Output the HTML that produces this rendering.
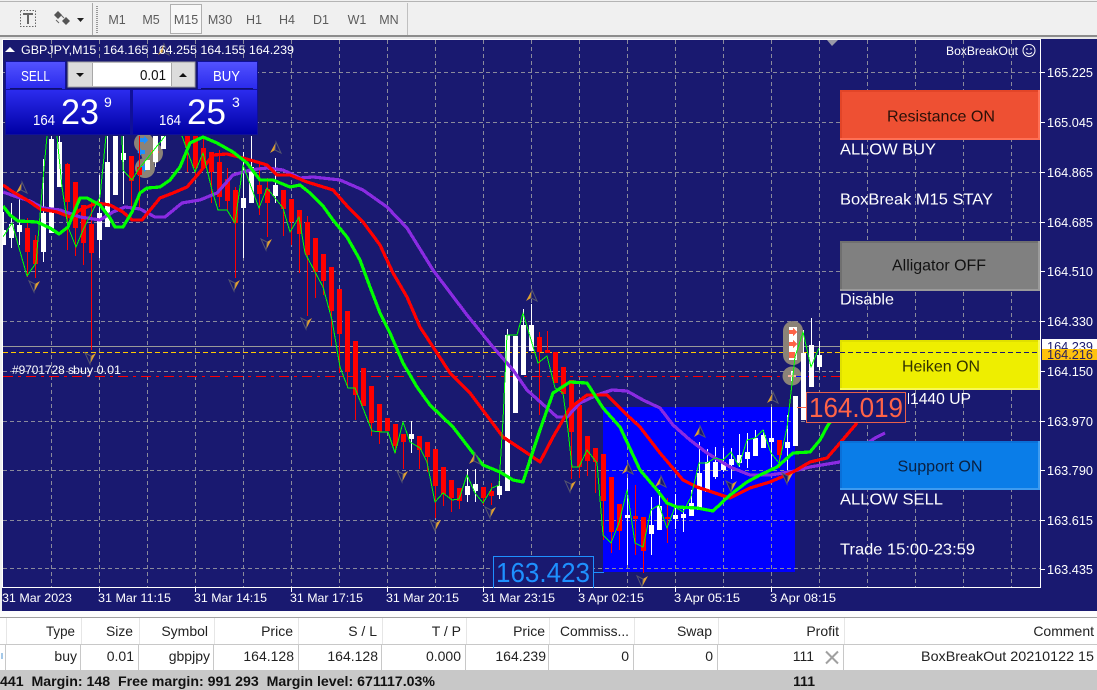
<!DOCTYPE html>
<html><head><meta charset="utf-8"><style>
html,body{margin:0;padding:0;background:#f0f0f0}
svg{display:block;font-family:"Liberation Sans",sans-serif}
.w{fill:none;stroke:#fff;stroke-width:1}
.wb{fill:none;stroke:#fff;stroke-width:5}
.r{fill:none;stroke:#f00;stroke-width:1}
.rb{fill:none;stroke:#f00;stroke-width:5}
.p{fill:none;stroke-linejoin:round}
.ax{fill:#fff;font-size:13px}
.tm{fill:#fff;font-size:12px}
.lb{fill:#fff;font-size:16px}
.bt{font-size:16px;text-anchor:middle}
.th{fill:#222;font-size:14px;text-anchor:end}
</style></head><body>
<svg width="1097" height="690" viewBox="0 0 1097 690" xmlns="http://www.w3.org/2000/svg">
<defs>
<linearGradient id="g1" x1="0" y1="0" x2="0" y2="1"><stop offset="0" stop-color="#5252ff"/><stop offset="1" stop-color="#2a2aec"/></linearGradient>
<linearGradient id="g2" x1="0" y1="0" x2="0" y2="1"><stop offset="0" stop-color="#2c2cee"/><stop offset="1" stop-color="#0000a4"/></linearGradient>
<g id="au"><polygon points="-5,5 1,-6 0,2" fill="#e0a030"/><polygon points="1,-6 6,5 0,2" fill="#191970" stroke="#55556e"/></g>
<g id="ad"><polygon points="5,-5 -1,6 0,-2" fill="#e0a030"/><polygon points="-1,6 -6,-5 0,-2" fill="#191970" stroke="#55556e"/></g>
<clipPath id="cc"><rect x="3" y="40" width="1037" height="547"/></clipPath>
</defs>

<!-- toolbar -->
<rect x="0" y="0" width="1097" height="35" fill="#f0f0f0"/>
<rect x="0" y="1" width="1097" height="1" fill="#b4b4b4"/>
<rect x="92" y="3" width="1" height="32" fill="#a8a8a8"/>
<path d="M97 6V33" stroke="#999" stroke-width="2" stroke-dasharray="1 1"/>
<rect x="407" y="3" width="1" height="32" fill="#c0c0c0"/>
<rect x="20.5" y="10.5" width="15" height="16" fill="none" stroke="#666" stroke-dasharray="1.5 1.500"/>
<path d="M23 14H33M28 14V24" stroke="#666" stroke-width="2" fill="none"/>
<path d="M58 11l4 4-4 4-4-4zM66 17l4 4-4 4-4-4z" fill="#555"/>
<path d="M56 20l3 3M61 15l3 3" stroke="#666" fill="none"/>
<path d="M77 18h7l-3.500 4z" fill="#222"/>
<rect x="170.500" y="4.500" width="31" height="29" fill="#f8f8f8" stroke="#b0b0b0"/>
<g fill="#5c5c5c" font-size="12.500" text-anchor="middle">
<text x="117" y="24">M1</text><text x="151" y="24">M5</text><text x="186" y="24">M15</text><text x="220" y="24">M30</text><text x="254" y="24">H1</text><text x="287" y="24">H4</text><text x="321" y="24">D1</text><text x="357" y="24">W1</text><text x="389" y="24">MN</text>
</g>
<rect x="0" y="35" width="1097" height="2" fill="#8c8c8c"/>
<rect x="0" y="37" width="1097" height="2" fill="#e8e8e8"/>

<!-- chart area -->
<rect x="2" y="39" width="1095" height="572" fill="#191970"/>
<rect x="0" y="611" width="1097" height="6" fill="#fdfdfd"/>
<rect x="603" y="407" width="192" height="165" fill="#0000ff"/>

<g stroke="#8a8a9c" stroke-width="1" stroke-dasharray="4 3" fill="none" shape-rendering="crispEdges">
<path d="M3 72.500H1040M3 122.500H1040M3 172.500H1040M3 222.500H1040M3 271.500H1040M3 321.500H1040M3 371.500H1040M3 421.500H1040M3 470.500H1040M3 520.500H1040M3 568.500H1040"/>
<path d="M51.500 40V587M99.500 40V587M147.500 40V587M195.500 40V587M243.500 40V587M291.500 40V587M339.500 40V587M387.500 40V587M435.500 40V587M483.500 40V587M531.500 40V587M579.500 40V587M627.500 40V587M675.500 40V587M723.500 40V587M771.500 40V587M819.500 40V587M867.500 40V587M915.500 40V587M963.500 40V587M1011.500 40V587"/>
</g>
<g shape-rendering="crispEdges">
<rect x="3" y="346" width="1037" height="1" fill="#9a9a9a"/>
<path d="M3 352.500H1040" stroke="#ffc800" stroke-dasharray="5 3" fill="none"/>
<path d="M3 376.500H1040" stroke="#f00" stroke-dasharray="10 5 3 5" fill="none"/>
</g>

<!-- blobs -->
<g fill="#8b8378">
<circle cx="145" cy="168" r="10"/><circle cx="152" cy="153" r="11"/><circle cx="144" cy="143" r="10"/>
<rect x="783" y="321" width="20" height="44" rx="10"/><circle cx="792" cy="376" r="9.500"/>
</g>
<g shape-rendering="crispEdges">
<rect x="789" y="327" width="8" height="33" fill="#fff"/>
<path d="M789 330h4v-2l4 4-4 4v-2h-4zM789 342h4v-2l4 4-4 4v-2h-4zM789 352h6v6h-6z" fill="#ff6347"/>
<rect x="788" y="375" width="8" height="2" fill="#fff"/><rect x="791" y="371" width="2" height="10" fill="#fff"/>
<path d="M788 376h8" stroke="#ff6347"/>
<path d="M796 376.500H808" stroke="#0000ff"/>
<path d="M140 138h4v-2l4 4-4 4v-2h-4zM140 166h4v-2l4 4-4 4v-2h-4zM145 150h-4v-2l-4 4 4 4v-2h4z" fill="#1e90ff"/>
<path d="M151 150h4v-2l4 4-4 4v-2h-4z" fill="#ff6347"/>
</g>

<!-- candles -->
<g clip-path="url(#cc)" shape-rendering="crispEdges">
<path class="r" d="M27.500 218V277M35.500 235V278M67.500 163V250M75.500 182V256M83.500 205V265M91.500 202V350M131.500 156V210M139.500 136V210M187.500 136V172M195.500 136V177M203.500 136V168M211.500 152V203M219.500 150V207M227.500 168V210M235.500 187V278M259.500 163V215M267.500 178V237M283.500 190V236M291.500 199V245M299.500 210V273M307.500 216V316M315.500 238V298M323.500 254V295M331.500 267V346M339.500 289V373M347.500 311V388M355.500 341V420M363.500 368V406M371.500 386V436M379.500 404V444M395.500 424V453M403.500 434V469M419.500 436V469M427.500 442V472M435.500 449V518M443.500 467V506M451.500 480V512M459.500 488V509M483.500 487V505M491.500 483V505M539.500 332V415M547.500 331V353M571.500 380V479M579.500 405V478M587.500 436V476M595.500 448V493M603.500 454V540M611.500 477V553M619.500 504V550M635.500 485V555M643.500 517V573M667.500 498V543M779.500 440V468"/>
<path class="rb" d="M27.500 228V252M35.500 240V264M67.500 164V202M75.500 182V228M83.500 205V243M91.500 224V253M131.500 156V181M139.500 167V175M187.500 136V148M195.500 136V168M203.500 148V168M211.500 152V172M219.500 162V197M227.500 179V201M235.500 190V223M259.500 185V194M267.500 189V203M283.500 190V209M291.500 199V222M299.500 210V234M307.500 222V255M315.500 238V272M323.500 254V281M331.500 267V311M339.500 289V334M347.500 311V372M355.500 341V395M363.500 368V406M371.500 386V423M379.500 404V432M387.500 418V431M395.500 424V446M403.500 434V442M419.500 436V450M427.500 442V457M435.500 449V486M443.500 467V494M451.500 480V498M459.500 488V501M483.500 487V498M491.500 491V496M539.500 337V352M547.500 350V353M555.500 352V383M563.500 367V394M571.500 380V432M579.500 405V467M587.500 436V461M595.500 448V462M603.500 454V501M611.500 477V532M619.500 504V531M635.500 516V519M643.500 517V551M667.500 517V519M779.500 440V455"/>
<path class="w" d="M3.500 212V245M11.500 203V248M19.500 198V245M43.500 159V262M51.500 136V233M59.500 136V187M99.500 175V258M107.500 136V227M115.500 136V195M123.500 136V204M155.500 136V167M163.500 136V149M243.500 152V258M251.500 136V203M275.500 158V203M411.500 421V453M467.500 469V502M475.500 469V502M499.500 470V499M507.500 329V491M515.500 336V413M523.500 309V375M531.500 304V351M627.500 478V565M651.500 497V555M659.500 490V530M675.500 494V529M683.500 508V532M691.500 490V516M699.500 442V510M707.500 449V492M715.500 447V479M723.500 448V472M731.500 448V479M739.500 434V467M747.500 433V468M755.500 430V456M763.500 430V448M771.500 407V467M787.500 415V470M795.500 396V446M803.500 330V420M811.500 318V387M819.500 341V370"/>
<path class="wb" d="M3.500 230V245M11.500 224V238M19.500 225V232M43.500 213V252M51.500 139V233M59.500 142V187M99.500 213V240M107.500 162V227M115.500 136V195M123.500 153V160M147.500 160V170M155.500 136V162M163.500 136V149M243.500 198V208M251.500 167V203M275.500 185V196M411.500 434V439M467.500 486V495M475.500 484V491M499.500 486V495M507.500 335V491M515.500 336V413M523.500 325V375M531.500 325V351M627.500 515V518M651.500 525V534M659.500 506V530M675.500 515V519M683.500 514V518M691.500 503V516M699.500 473V510M707.500 462V492M715.500 462V477M723.500 462V470M731.500 459V465M739.500 455V463M747.500 452V459M755.500 438V456M763.500 435V448M771.500 438V442M787.500 442V448M795.500 396V446M803.500 353V420M811.500 345V387M819.500 355V367"/>

<!-- purple -->
<polyline class="p" stroke="#8a2be2" stroke-width="3.200" points="3,192 17,197 30,201 43,208 60,210 80,217 100,220 113,212 125,207 140,209 155,217 165,217 182,203 200,200 217,193 233,175 250,170 267,168 283,170 300,178 313,177 340,180 363,190 387,207 407,228 433,270 467,315 493,347 513,370 527,390 557,417 567,417 580,403 597,395 612,390 627,391 643,400 660,408 673,425 690,440 707,453 730,467 750,475 770,475 790,472 810,467 840,462 875,438 885,433"/>
<!-- red -->
<polyline class="p" stroke="#f00" stroke-width="3.200" points="3,185 13,192 27,200 40,209 57,212 70,217 80,210 97,203 110,205 123,212 132,220 142,220 160,198 173,193 187,187 200,172 213,155 227,154 243,158 257,162 267,165 277,175 290,175 307,182 333,190 348,207 363,222 380,245 393,273 407,297 420,327 437,353 450,373 470,393 503,437 527,453 540,462 553,437 570,408 587,395 607,395 627,415 640,427 660,453 683,480 697,487 730,498 750,488 770,482 793,472 810,462 827,458 840,443 857,423"/>
<!-- green thick -->
<polyline class="p" stroke="#00ff00" stroke-width="3.200" points="3,206 10,215 18,221 37,222 50,228 59,234 68,227 80,198 87,198 100,205 110,218 115,227 123,227 132,212 140,193 147,188 160,187 170,180 180,167 190,143 203,137 217,143 233,152 247,163 260,180 273,180 290,187 300,185 310,193 323,206 333,220 347,237 360,260 370,287 380,313 390,333 403,363 417,387 430,405 453,427 473,453 483,465 500,472 513,480 523,482 530,460 540,430 553,393 570,382 587,383 603,408 620,427 640,470 657,490 667,503 677,507 697,508 713,511 730,495 747,482 760,475 777,467 793,453 810,452 820,440 828,425 838,412"/>
<!-- green thin -->
<polyline class="p" stroke="#00ff00" stroke-width="1" points="3,237 12,223 27,276 36,263 43,180 47,136"/>
<polyline class="p" stroke="#00ff00" stroke-width="1" points="57,136 62,187 68,227 76,247 83,230 93,210 100,197 106,136"/>
<polyline class="p" stroke="#00ff00" stroke-width="1" points="122,136 123,170 132,180 138,170 165,136"/>
<polyline class="p" stroke="#00ff00" stroke-width="1" points="182,136 195,172 203,153 212,190 218,210 227,210 235,223 243,165 259,208 267,188 283,208 290,232 299,217 305,253 323,287 332,320 340,367 348,388 355,388 372,431 382,432 388,432 395,453 403,422 410,442 420,448 427,462 435,502 443,493 452,500 459,499 467,475 475,493 483,503 492,488 499,485 503,420 507,335 517,335 523,313 538,363 547,356 555,388 563,393 568,430 572,467 579,467 587,450 597,463 603,535 611,543 619,523 627,490 635,543 643,547 651,510 659,505 667,528 675,507 683,512 691,497 699,463 707,463 715,458 723,460 731,452 739,466 747,440 755,438 763,430 771,453 779,463 787,428 795,357 803,332 811,367 819,348"/>
</g>

<!-- arrows -->
<use href="#au" x="21" y="188"/><use href="#au" x="275" y="148"/><use href="#au" x="163" y="50"/><use href="#au" x="531" y="296"/><use href="#au" x="772" y="398"/><use href="#au" x="699" y="432"/><use href="#au" x="627" y="469"/><use href="#au" x="660" y="482"/><use href="#au" x="474" y="459"/>
<use href="#ad" x="35" y="286"/><use href="#ad" x="91" y="358"/><use href="#ad" x="235" y="285"/><use href="#ad" x="267" y="244"/><use href="#ad" x="307" y="323"/><use href="#ad" x="403" y="476"/><use href="#ad" x="436" y="525"/><use href="#ad" x="491" y="512"/><use href="#ad" x="571" y="486"/><use href="#ad" x="643" y="581"/><use href="#ad" x="732" y="486"/><use href="#ad" x="788" y="478"/>

<!-- frame -->
<g shape-rendering="crispEdges">
<rect x="2" y="39" width="1039" height="1" fill="#fff"/>
<rect x="2" y="39" width="1" height="549" fill="#fff"/>
<rect x="1040" y="39" width="1" height="549" fill="#fff"/>
<rect x="2" y="587" width="1039" height="1" fill="#fff"/>
<path d="M1041 72.500h4M1041 122.500h4M1041 172.500h4M1041 222.500h4M1041 271.500h4M1041 321.500h4M1041 371.500h4M1041 421.500h4M1041 470.500h4M1041 520.500h4M1041 569.500h4" stroke="#fff"/>
<path d="M99.500 588v4M195.500 588v4M291.500 588v4M387.500 588v4M483.500 588v4M579.500 588v4M675.500 588v4M771.500 588v4" stroke="#fff"/>
</g>
<polygon points="827,40 838,40 832,46" fill="#9a9aa8"/>

<!-- header text -->
<polygon points="5,52 15,52 10,47" fill="#fff"/>
<text x="21" y="54" fill="#fff" font-size="12" textLength="273" lengthAdjust="spacingAndGlyphs" xml:space="preserve">GBPJPY,M15  164.165 164.255 164.155 164.239</text>
<text x="946" y="55" fill="#fff" font-size="12" textLength="72" lengthAdjust="spacingAndGlyphs">BoxBreakOut</text>
<circle cx="1029" cy="50.500" r="6" fill="none" stroke="#fff"/>
<circle cx="1027" cy="49" r=".8" fill="#fff"/><circle cx="1031" cy="49" r=".8" fill="#fff"/>
<path d="M1026 52.500q3 3 6 0" fill="none" stroke="#fff"/>

<!-- trade panel -->
<rect x="5" y="61" width="253" height="74" fill="#101098"/>
<rect x="66" y="61" width="131" height="28" fill="#191970"/>
<rect x="6" y="62" width="59" height="27" fill="url(#g1)"/>
<rect x="198" y="62" width="59" height="27" fill="url(#g1)"/>
<rect x="6" y="90" width="124" height="44" fill="url(#g2)"/>
<rect x="133" y="90" width="124" height="44" fill="url(#g2)"/>
<rect x="10" y="88" width="52" height="1" fill="#101070"/><rect x="201" y="88" width="52" height="1" fill="#101070"/>
<text x="21" y="81" fill="#fff" font-size="15" textLength="29" lengthAdjust="spacingAndGlyphs">SELL</text>
<text x="213" y="81" fill="#fff" font-size="15" textLength="27" lengthAdjust="spacingAndGlyphs">BUY</text>
<rect x="68" y="62" width="127" height="25" fill="#dcdcdc" stroke="#a0a0a0"/>
<rect x="93" y="63" width="78" height="23" fill="#fff"/>
<rect x="92" y="63" width="1" height="23" fill="#a8a8a8"/><rect x="171" y="63" width="1" height="23" fill="#a8a8a8"/>
<path d="M76 73h8l-4 4zM179 77h8l-4-4z" fill="#111"/>
<text x="166" y="80" fill="#111" font-size="15" text-anchor="end" textLength="26" lengthAdjust="spacingAndGlyphs">0.01</text>
<g fill="#fff">
<text x="33" y="125" font-size="15" textLength="22" lengthAdjust="spacingAndGlyphs">164</text>
<text x="61" y="124" font-size="35" textLength="38" lengthAdjust="spacingAndGlyphs">23</text>
<text x="104" y="107" font-size="14">9</text>
<text x="159" y="125" font-size="15" textLength="22" lengthAdjust="spacingAndGlyphs">164</text>
<text x="187" y="124" font-size="35" textLength="39" lengthAdjust="spacingAndGlyphs">25</text>
<text x="232" y="107" font-size="14">3</text>
</g>

<!-- order text -->
<text x="12" y="374" fill="#fff" font-size="12" textLength="62" lengthAdjust="spacingAndGlyphs">#9701728 s</text>
<text x="73" y="374" fill="#fff" font-size="12" textLength="48" lengthAdjust="spacingAndGlyphs">buy 0.01</text>

<!-- axis -->
<g class="ax">
<text x="1047" y="77" textLength="46" lengthAdjust="spacingAndGlyphs">165.225</text>
<text x="1047" y="127" textLength="46" lengthAdjust="spacingAndGlyphs">165.045</text>
<text x="1047" y="177" textLength="46" lengthAdjust="spacingAndGlyphs">164.865</text>
<text x="1047" y="227" textLength="46" lengthAdjust="spacingAndGlyphs">164.685</text>
<text x="1047" y="276" textLength="46" lengthAdjust="spacingAndGlyphs">164.510</text>
<text x="1047" y="326" textLength="46" lengthAdjust="spacingAndGlyphs">164.330</text>
<text x="1047" y="376" textLength="46" lengthAdjust="spacingAndGlyphs">164.150</text>
<text x="1047" y="426" textLength="46" lengthAdjust="spacingAndGlyphs">163.970</text>
<text x="1047" y="475" textLength="46" lengthAdjust="spacingAndGlyphs">163.790</text>
<text x="1047" y="525" textLength="46" lengthAdjust="spacingAndGlyphs">163.615</text>
<text x="1047" y="574" textLength="46" lengthAdjust="spacingAndGlyphs">163.435</text>
</g>
<rect x="1042" y="339" width="55" height="11" fill="#fff"/>
<text x="1047" y="351" fill="#191970" font-size="13" textLength="46" lengthAdjust="spacingAndGlyphs">164.239</text>
<rect x="1042" y="349" width="55" height="11" fill="#ffc20e"/>
<text x="1047" y="359" fill="#2a2060" font-size="13" textLength="46" lengthAdjust="spacingAndGlyphs">164.216</text>

<g class="tm">
<text x="2" y="602" textLength="70" lengthAdjust="spacingAndGlyphs">31 Mar 2023</text>
<text x="98" y="602" textLength="73" lengthAdjust="spacingAndGlyphs">31 Mar 11:15</text>
<text x="194" y="602" textLength="73" lengthAdjust="spacingAndGlyphs">31 Mar 14:15</text>
<text x="290" y="602" textLength="73" lengthAdjust="spacingAndGlyphs">31 Mar 17:15</text>
<text x="386" y="602" textLength="73" lengthAdjust="spacingAndGlyphs">31 Mar 20:15</text>
<text x="482" y="602" textLength="73" lengthAdjust="spacingAndGlyphs">31 Mar 23:15</text>
<text x="578" y="602" textLength="66" lengthAdjust="spacingAndGlyphs">3 Apr 02:15</text>
<text x="674" y="602" textLength="66" lengthAdjust="spacingAndGlyphs">3 Apr 05:15</text>
<text x="770" y="602" textLength="66" lengthAdjust="spacingAndGlyphs">3 Apr 08:15</text>
</g>

<!-- right buttons -->
<g shape-rendering="crispEdges">
<rect x="840" y="90" width="200" height="50" fill="#ff7055"/><rect x="840" y="90" width="198" height="48" fill="#e24528"/><rect x="842" y="92" width="196" height="46" fill="#ee5033"/>
<rect x="840" y="241" width="200" height="50" fill="#9a9a9a"/><rect x="840" y="241" width="198" height="48" fill="#707070"/><rect x="842" y="243" width="196" height="46" fill="#808080"/>
<rect x="840" y="340" width="200" height="50" fill="#f8f855"/><rect x="840" y="340" width="198" height="48" fill="#e0e000"/><rect x="842" y="342" width="196" height="46" fill="#eeee00"/>
<rect x="840" y="441" width="200" height="49" fill="#3d9bf0"/><rect x="840" y="441" width="198" height="47" fill="#0a70d8"/><rect x="842" y="443" width="196" height="45" fill="#0a7de8"/>
<path d="M840 352.500H1040" stroke="#191970" stroke-dasharray="5 3" fill="none"/>
</g>
<text class="bt" x="941" y="121.500" fill="#2a1008" textLength="108" lengthAdjust="spacingAndGlyphs">Resistance ON</text>
<text class="bt" x="939" y="270.500" fill="#111" textLength="94" lengthAdjust="spacingAndGlyphs">Alligator OFF</text>
<text class="bt" x="941" y="371.500" fill="#333300" textLength="78" lengthAdjust="spacingAndGlyphs">Heiken ON</text>
<text class="bt" x="940" y="471.500" fill="#0a2040" textLength="85" lengthAdjust="spacingAndGlyphs">Support ON</text>
<text class="lb" x="840" y="154.500" textLength="96" lengthAdjust="spacingAndGlyphs">ALLOW BUY</text>
<text class="lb" x="840" y="204.500" textLength="153" lengthAdjust="spacingAndGlyphs">BoxBreak M15 STAY</text>
<text class="lb" x="840" y="304.500" textLength="54" lengthAdjust="spacingAndGlyphs">Disable</text>
<rect x="908" y="393" width="1" height="11" fill="#fff"/>
<text class="lb" x="910" y="404" textLength="61" lengthAdjust="spacingAndGlyphs">1440 UP</text>
<text class="lb" x="840" y="504.500" textLength="103" lengthAdjust="spacingAndGlyphs">ALLOW SELL</text>
<text class="lb" x="840" y="554.500" textLength="135" lengthAdjust="spacingAndGlyphs">Trade 15:00-23:59</text>

<!-- price labels -->
<path d="M797 407.500H807" stroke="#ff6347"/>
<rect x="806.500" y="392.500" width="99" height="30" fill="#191970" stroke="#e8604a"/>
<text x="809" y="417" fill="#ff6347" font-size="28" textLength="94" lengthAdjust="spacingAndGlyphs">164.019</text>
<path d="M593 572.500H604" stroke="#1e90ff"/>
<rect x="493.500" y="556.500" width="100" height="31" fill="#191970" stroke="#1e90ff"/>
<text x="496" y="582" fill="#1e90ff" font-size="28" textLength="94" lengthAdjust="spacingAndGlyphs">163.423</text>
<rect x="494" y="587" width="99" height="1" fill="#fff"/>

<!-- table -->
<rect x="0" y="617" width="1097" height="53" fill="#fff"/>
<g shape-rendering="crispEdges" fill="none">
<path d="M0 617.500H1097" stroke="#a0a0a0"/>
<path d="M0 644.500H1097" stroke="#c8c8c8"/>
<path d="M6.500 618V644M81.500 618V644M139.500 618V644M214.500 618V644M298.500 618V644M382.500 618V644M466.500 618V644M549.500 618V644M634.500 618V644M718.500 618V644M844.500 618V644" stroke="#e6e6e6"/>
<path d="M5.500 645V670M80.500 645V670M138.500 645V670M213.500 645V670M298.500 645V670M381.500 645V670M465.500 645V670M548.500 645V670M633.500 645V670M717.500 645V670M843.500 645V670" stroke="#c8c8c8"/>
</g>
<text class="th" x="75" y="636" textLength="29" lengthAdjust="spacingAndGlyphs">Type</text>
<text class="th" x="133" y="636" textLength="27" lengthAdjust="spacingAndGlyphs">Size</text>
<text class="th" x="208" y="636">Symbol</text>
<text class="th" x="293" y="636">Price</text>
<text class="th" x="377" y="636">S / L</text>
<text class="th" x="461" y="636">T / P</text>
<text class="th" x="545" y="636">Price</text>
<text class="th" x="629" y="636" textLength="69" lengthAdjust="spacingAndGlyphs">Commiss...</text>
<text class="th" x="712" y="636">Swap</text>
<text class="th" x="839" y="636">Profit</text>
<text class="th" x="1094" y="636">Comment</text>
<text class="th" x="77" y="661">buy</text>
<text class="th" x="134" y="661">0.01</text>
<text class="th" x="210" y="661">gbpjpy</text>
<text class="th" x="294" y="661">164.128</text>
<text class="th" x="378" y="661">164.128</text>
<text class="th" x="461" y="661">0.000</text>
<text class="th" x="546" y="661">164.239</text>
<text class="th" x="629" y="661">0</text>
<text class="th" x="713" y="661">0</text>
<text class="th" x="814" y="661">111</text>
<path d="M826 651.500l12 12M838 651.500l-12 12" stroke="#a0a0a0" stroke-width="2" fill="none"/>
<text class="th" x="1094" y="661" textLength="173" lengthAdjust="spacingAndGlyphs">BoxBreakOut 20210122 15</text>
<path d="M2 653v6" stroke="#4a90d0"/>
<rect x="0" y="670" width="1097" height="20" fill="#c8c8c8"/>
<text x="0" y="686" fill="#111" font-size="14" font-weight="bold" textLength="435" lengthAdjust="spacingAndGlyphs" xml:space="preserve">441  Margin: 148  Free margin: 991 293  Margin level: 671117.03%</text>
<text x="815" y="686" fill="#111" font-size="14" font-weight="bold" text-anchor="end">111</text>
</svg>
</body></html>
